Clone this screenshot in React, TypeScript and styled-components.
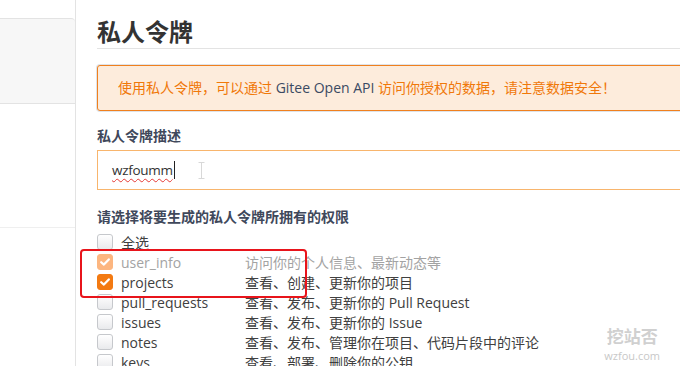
import React from 'react';
import styled, { createGlobalStyle, css } from 'styled-components';

const GlobalStyle = createGlobalStyle`
  html, body {
    margin: 0;
    padding: 0;
    background: #fff;
    overflow: hidden;
  }
  body {
    font-family: "Open Sans", "Noto Sans CJK SC", sans-serif;
    color: #333;
    font-size: 14px;
  }
`;

const Page = styled.div`
  display: flex;
  width: 680px;
  height: 366px;
  overflow: hidden;
  position: relative;
`;

const Sidebar = styled.div`
  width: 75px;
  flex-shrink: 0;
  border-right: 1px solid #e3e3e3;
  padding-top: 18px;
`;

const SideCard = styled.div`
  height: 84px;
  background: #f7f7f7;
  border: 1px solid #e3e3e3;
  border-left: none;
  border-right: none;
  border-top-right-radius: 4px;
`;

const SideBlock = styled.div`
  height: 123px;
  border-bottom: 1px solid #efefef;
`;

const Main = styled.div`
  flex-shrink: 0;
  width: 640px;
  padding: 16px 0 0 21px;
`;

const Title = styled.h1`
  margin: 0;
  font-size: 24px;
  font-weight: bold;
  line-height: 32px;
  color: #333;
  border-bottom: 1px solid #e3e3e3;
`;

const Alert = styled.div`
  margin-top: 16px;
  height: 44px;
  line-height: 44px;
  padding-left: 20px;
  background: #fdecdc;
  border: 1px solid #f0801e;
  border-radius: 3px;
  box-shadow: 0 0 0 1px #dfe3e8;
  color: #f0780a;
  font-size: 14px;
`;

const Em = styled.span`
  color: #3b4a63;
`;

const Label = styled.div<{ $top: number }>`
  margin-top: ${(p) => p.$top}px;
  line-height: 20px;
  font-weight: bold;
  color: #40485b;
`;

const Input = styled.div`
  margin-top: 4px;
  height: 38px;
  border: 1px solid #f8b56d;
  display: flex;
  align-items: center;
  padding-left: 14px;
`;

const Typed = styled.span`
  font-size: 13.5px;
  letter-spacing: -0.3px;
  color: #333;
  text-decoration: underline wavy #e53935;
  text-decoration-thickness: 1px;
  text-underline-offset: 3px;
`;

const Caret = styled.span`
  width: 1px;
  height: 18px;
  background: #222;
  margin-left: 1px;
`;

const IBeam = styled.svg`
  margin-left: 23px;
`;

const List = styled.div`
  margin-top: 5px;
  position: relative;
`;

const Row = styled.div`
  display: flex;
  align-items: center;
  height: 20px;
`;

const boxChecked = css`
  background: #f37a12;
  border-color: #f37a12;
`;

const boxDisabled = css`
  background: #fcb680;
  border-color: #fcb680;
`;

const Box = styled.span<{ $state: 'off' | 'on' | 'dis' }>`
  width: 14px;
  height: 14px;
  border: 1px solid #c6c8cc;
  border-radius: 3px;
  background: linear-gradient(#ffffff, #e9eaec);
  display: flex;
  align-items: center;
  justify-content: center;
  flex-shrink: 0;
  ${(p) => (p.$state === 'on' ? boxChecked : p.$state === 'dis' ? boxDisabled : '')}
`;

const Name = styled.span<{ $muted?: boolean }>`
  margin-left: 8px;
  width: 124px;
  color: ${(p) => (p.$muted ? '#a3a3a3' : '#404040')};
`;

const Desc = styled.span<{ $muted?: boolean }>`
  color: ${(p) => (p.$muted ? '#a3a3a3' : '#404040')};
  white-space: nowrap;
`;

const Highlight = styled.div`
  position: absolute;
  left: -17px;
  top: 17px;
  width: 223px;
  height: 45px;
  border: 2px solid #e8141b;
  border-radius: 4px;
  pointer-events: none;
`;

const Watermark = styled.div`
  position: absolute;
  right: 20px;
  bottom: 5px;
  display: flex;
  flex-direction: column;
  align-items: center;
  color: #d0d0d0;
  line-height: 1;
`;

const MarkTitle = styled.span`
  font-size: 17px;
  font-weight: bold;
`;

const MarkSub = styled.span`
  margin-top: 5px;
  font-size: 11px;
  font-family: "Open Sans", sans-serif;
  color: #c8c8c8;
`;

const Check = () => (
  <svg width="10" height="8" viewBox="0 0 10 8">
    <path d="M1.2 4.2 L3.9 6.6 L8.8 1.4" fill="none" stroke="#fff" strokeWidth="2.2" strokeLinecap="round" strokeLinejoin="round" />
  </svg>
);

type Scope = { name: string; desc: string; state: 'off' | 'on' | 'dis' };

const scopes: Scope[] = [
  { name: '全选', desc: '', state: 'off' },
  { name: 'user_info', desc: '访问你的个人信息、最新动态等', state: 'dis' },
  { name: 'projects', desc: '查看、创建、更新你的项目', state: 'on' },
  { name: 'pull_requests', desc: '查看、发布、更新你的 Pull Request', state: 'off' },
  { name: 'issues', desc: '查看、发布、更新你的 Issue', state: 'off' },
  { name: 'notes', desc: '查看、发布、管理你在项目、代码片段中的评论', state: 'off' },
  { name: 'keys', desc: '查看、部署、删除你的公钥', state: 'off' },
];

function App(): JSX.Element {
  return (
    <>
      <GlobalStyle />
      <Page>
        <Sidebar>
          <SideCard />
          <SideBlock />
        </Sidebar>
        <Main>
          <Title>私人令牌</Title>
          <Alert>
            使用私人令牌，可以通过 <Em>Gitee Open API</Em> 访问你授权的数据，请注意数据安全！
          </Alert>
          <Label $top={15}>私人令牌描述</Label>
          <Input>
            <Typed>wzfoumm</Typed>
            <Caret />
            <IBeam width="7" height="17" viewBox="0 0 7 17">
              <path d="M0.5 0.5 H6.5 M3.5 0.5 V16.5 M0.5 16.5 H6.5" stroke="#d8d8d8" strokeWidth="1" fill="none" />
            </IBeam>
          </Input>
          <Label $top={17}>请选择将要生成的私人令牌所拥有的权限</Label>
          <List>
            {scopes.map((s) => (
              <Row key={s.name}>
                <Box $state={s.state}>{s.state !== 'off' && <Check />}</Box>
                <Name $muted={s.state === 'dis'}>{s.name}</Name>
                <Desc $muted={s.state === 'dis'}>{s.desc}</Desc>
              </Row>
            ))}
            <Highlight />
          </List>
        </Main>
        <Watermark>
          <MarkTitle>挖站否</MarkTitle>
          <MarkSub>wzfou.com</MarkSub>
        </Watermark>
      </Page>
    </>
  );
}

export default App;
